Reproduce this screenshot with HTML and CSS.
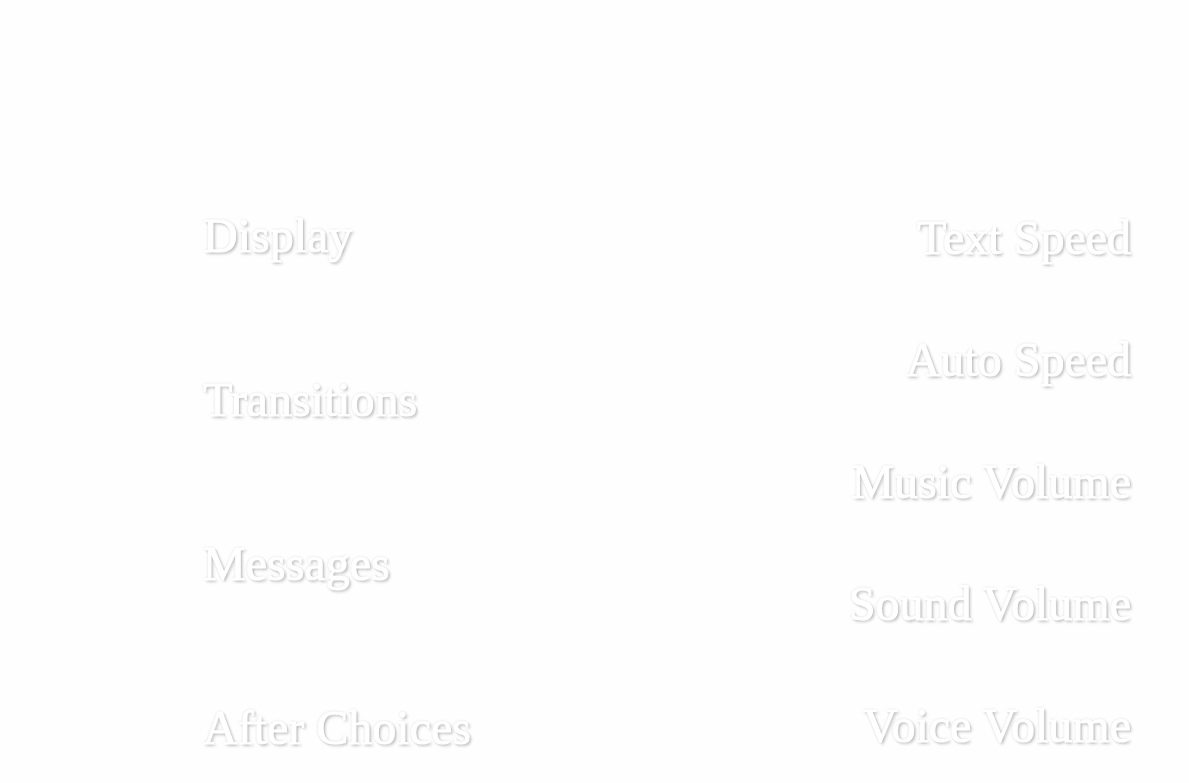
FILE: index.html
```html
<!DOCTYPE html>
<html lang="en">
<head>
<meta charset="utf-8">
<title>Preferences</title>
<link rel="stylesheet" href="styles.css">
</head>
<body>
<main class="preferences">
  <section class="options">
    <h2 class="label">Display</h2>
    <h2 class="label">Transitions</h2>
    <h2 class="label">Messages</h2>
    <h2 class="label">After Choices</h2>
  </section>
  <section class="sliders">
    <h2 class="label">Text Speed</h2>
    <h2 class="label">Auto Speed</h2>
    <h2 class="label">Music Volume</h2>
    <h2 class="label">Sound Volume</h2>
    <h2 class="label">Voice Volume</h2>
  </section>
</main>
</body>
</html>
```
FILE: styles.css
```css
body {
  margin: 0;
  background: #fefefe;
  font-family: "Liberation Serif", serif;
}
.preferences {
  display: flex;
  justify-content: space-between;
  padding: 206px 58px 0 203px;
  will-change: opacity;
}
.options,
.sliders {
  display: flex;
  flex-direction: column;
}
.options {
  gap: 104px;
}
.sliders {
  gap: 62px;
  padding-top: 2px;
  text-align: right;
}
.label {
  margin: 0;
  font-size: 48px;
  line-height: 60px;
  font-weight: 400;
  color: #fff;
  -webkit-text-stroke: 1px #fff;
  text-shadow: 0 0 3px rgba(0, 0, 0, 0.2), 2px 2px 3px rgba(0, 0, 0, 0.24);
}
```
